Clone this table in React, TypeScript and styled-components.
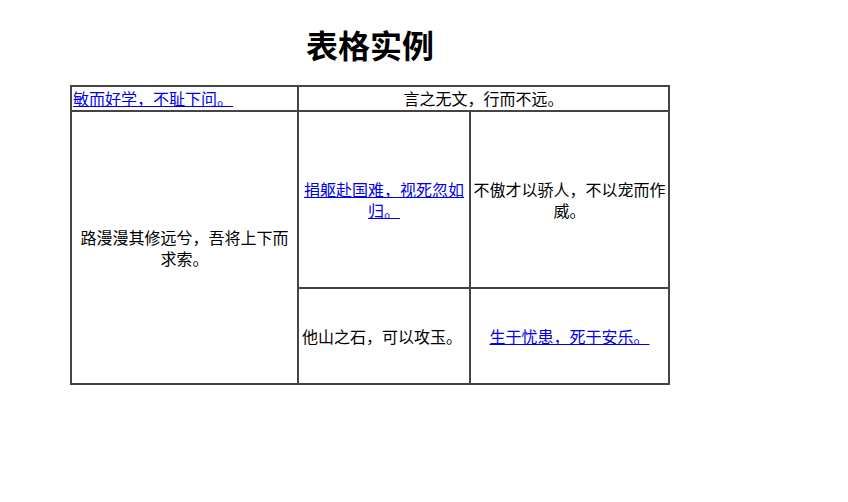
import React from "react";
import styled, { createGlobalStyle } from "styled-components";

const Global = createGlobalStyle`
  html, body { margin: 0; padding: 0; background: #fff; }
  body { font-family: "Noto Sans CJK SC", "Liberation Sans", sans-serif; color: #000; }
`;

const Page = styled.div`
  padding: 26px 0 0 70px;
`;

const Content = styled.div`
  width: 600px;
`;

const Title = styled.h1`
  margin: 0 0 23px;
  font-size: 32px;
  line-height: 36px;
  font-weight: 700;
  text-align: center;
`;

const Table = styled.table`
  width: 600px;
  table-layout: fixed;
  border: 1px solid #444;
  border-spacing: 0;
  font-size: 16px;
  line-height: 21px;
`;

const Row = styled.tr<{ $h: number }>`
  height: ${(p) => p.$h}px;
`;

const Cell = styled.td<{ $align?: "left" | "center"; $px?: number }>`
  border: 1px solid #444;
  padding: 1px ${(p) => p.$px ?? 1}px;
  text-align: ${(p) => p.$align ?? "left"};
  vertical-align: middle;
`;

const Link = styled.a`
  color: #0000ee;
  text-decoration: underline;
`;

export default function App() {
  return (
    <>
      <Global />
      <Page>
        <Content>
          <Title>表格实例</Title>
          <Table>
            <colgroup>
              <col style={{ width: 227 }} />
              <col style={{ width: 172 }} />
              <col style={{ width: 199 }} />
            </colgroup>
            <tbody>
              <Row $h={25}>
                <Cell>
                  <Link href="#">敏而好学，不耻下问。</Link>
                </Cell>
                <Cell colSpan={2} $align="center">
                  言之无文，行而不远。
                </Cell>
              </Row>
              <Row $h={177}>
                <Cell rowSpan={2} $align="center" $px={6}>
                  路漫漫其修远兮，吾将上下而求索。
                </Cell>
                <Cell $align="center">
                  <Link href="#">捐躯赴国难，视死忽如归。</Link>
                </Cell>
                <Cell $align="center">不傲才以骄人，不以宠而作威。</Cell>
              </Row>
              <Row $h={96}>
                <Cell $px={3}>他山之石，可以攻玉。</Cell>
                <Cell $align="center">
                  <Link href="#">生于忧患，死于安乐。</Link>
                </Cell>
              </Row>
            </tbody>
          </Table>
        </Content>
      </Page>
    </>
  );
}
